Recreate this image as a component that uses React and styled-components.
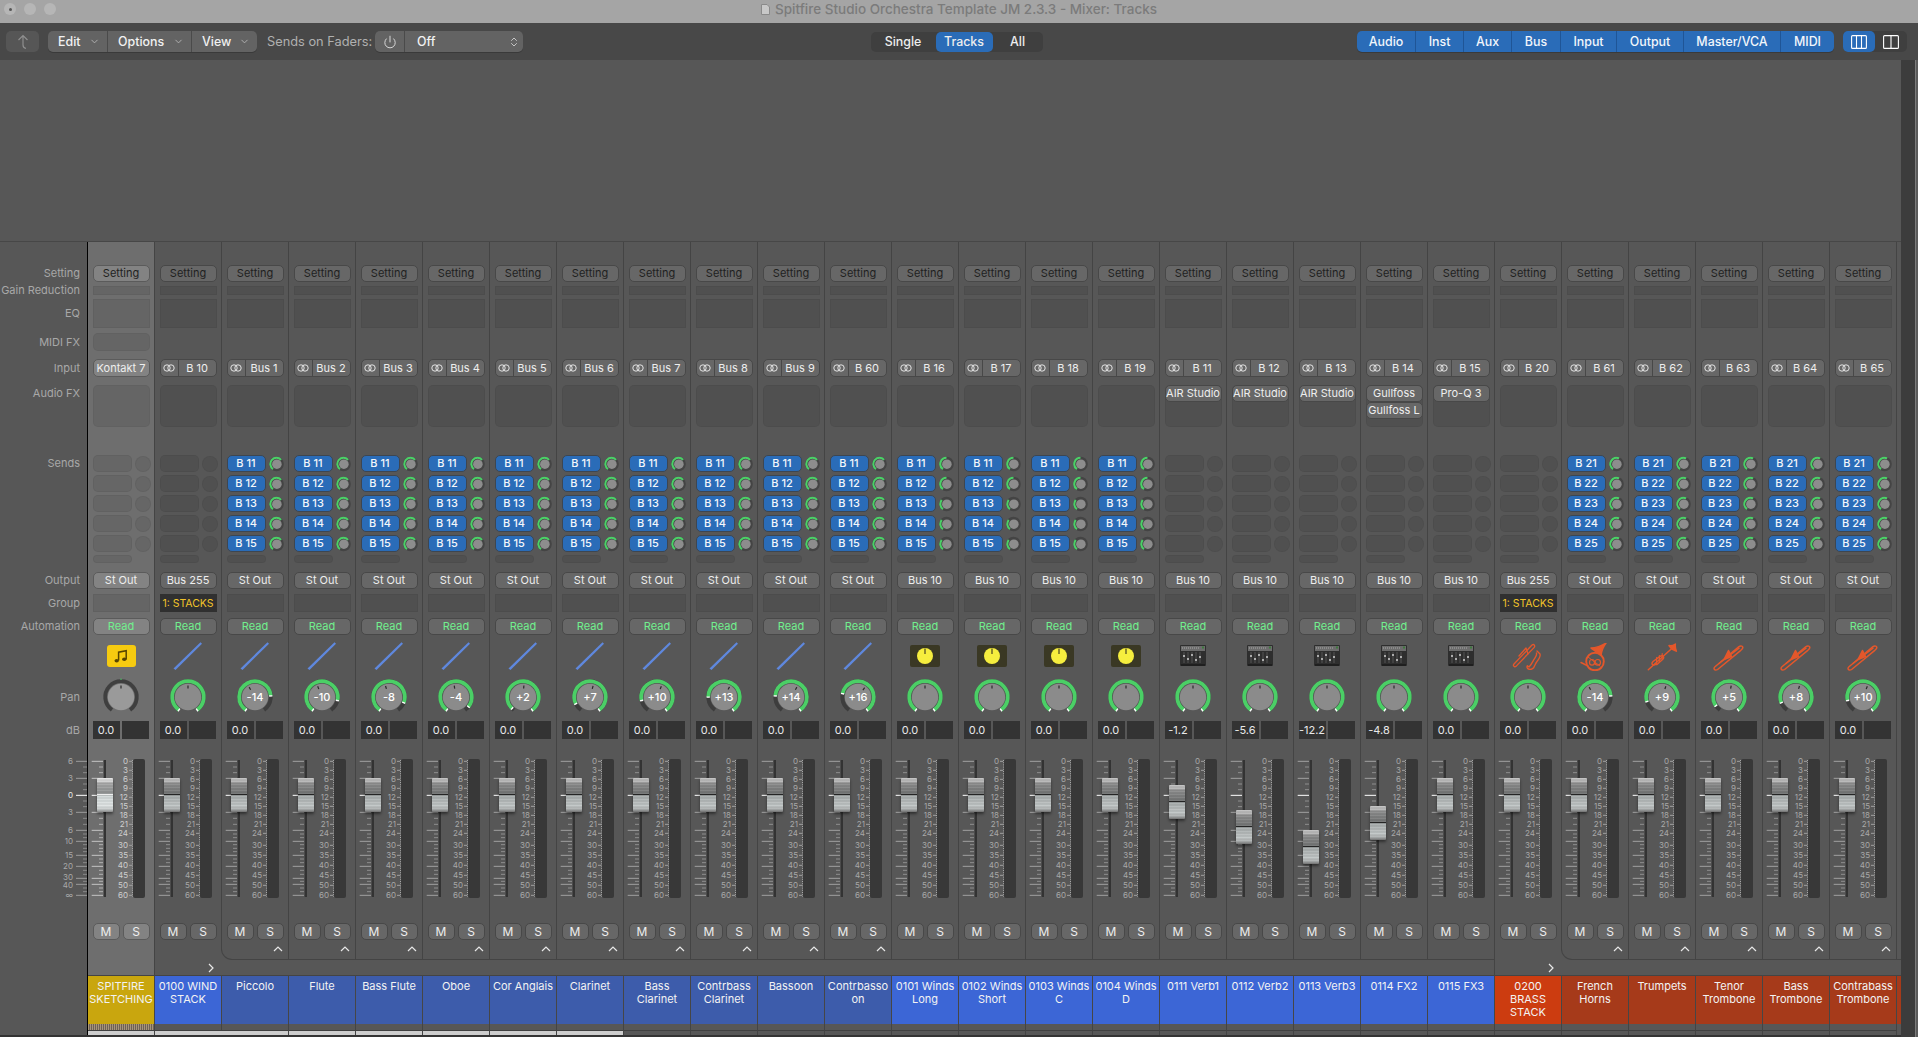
import React from 'react';
import styled, { createGlobalStyle } from 'styled-components';
import { ChevronDown, ChevronsUpDown, Power } from 'lucide-react';

const Global = createGlobalStyle`
  html, body { margin: 0; padding: 0; background: #575757; }
  body { font-family: Inter, "Liberation Sans", sans-serif; font-size: 11px; color: #eee; -webkit-font-smoothing: antialiased; }
  * { box-sizing: border-box; }
`;

const Page = styled.div`
  width: 1918px; height: 1037px; overflow: hidden; display: flex; flex-direction: column; background: #575757;
`;
const TitleBar = styled.div`
  height: 23px; flex: none; background: #a5a5a5; display: grid; grid-template-columns: 1fr auto 1fr; align-items: center; padding: 0 4px 5px;
`;
const Traffic = styled.div` display: flex; gap: 8px; `;
const Light = styled.span`
  width: 12px; height: 12px; border-radius: 50%; background: #b6b6b6; display: flex; align-items: center; justify-content: center;
  &::after { content: ''; width: 3px; height: 3px; border-radius: 50%; background: ${p => p.$dot ? '#555' : 'transparent'}; }
`;
const TitleText = styled.div`
  display: flex; align-items: center; gap: 5px; font-size: 13.5px; font-weight: 500; color: #7b7b7b; white-space: nowrap;
`;
const Toolbar = styled.div`
  height: 37px; flex: none; background: #484848; display: grid; grid-template-columns: 1fr auto 1fr; align-items: center; padding: 0 11px 0 6px; margin-top: 0;
`;
const ToolLeft = styled.div` display: flex; align-items: center; `;
const ToolRight = styled.div` display: flex; align-items: center; justify-content: flex-end; gap: 9px; `;
const ArrowButton = styled.div`
  width: 33px; height: 21px; border-radius: 5px; background: #565656; margin-right: 9px; display: flex; align-items: center; justify-content: center;
`;
const MenuGroup = styled.div`
  display: flex; height: 21px; border-radius: 5px; background: #636363; overflow: hidden; box-shadow: 0 1px 0 #3a3a3a;
  margin-right: ${p => p.$mr || 0}px;
`;
const MenuItem = styled.div`
  width: ${p => p.$w}px; display: flex; align-items: center; justify-content: space-between; padding: 0 7px 0 10px; font-size: 12.4px; font-weight: 500; color: #f1f1f1;
  border-right: 1px solid #4a4a4a; &:last-child { border-right: 0; }
`;
const ToolLabel = styled.div` font-size: 12.8px; color: #b0b0b0; width: 108px; white-space: nowrap; `;
const PowerCell = styled.div` width: 30px; display: flex; align-items: center; justify-content: center; border-right: 1px solid #4a4a4a; `;
const SelectCell = styled.div` width: 118px; display: flex; align-items: center; justify-content: space-between; padding: 0 3px 0 12px; font-size: 12.4px; font-weight: 500; color: #f1f1f1; `;
const ModeGroup = styled.div` display: flex; height: 20px; border-radius: 5px; background: #3f3f3f; `;
const ModeItem = styled.div`
  width: ${p => p.$w}px; border-radius: 5px; display: flex; align-items: center; justify-content: center; font-size: 12.4px; font-weight: 500; color: #eee;
  background: ${p => p.$on ? '#2a6cb8' : 'transparent'};
`;
const FilterGroup = styled.div` display: flex; height: 21px; border-radius: 5px; background: #2a6cb8; overflow: hidden; box-shadow: 0 1px 0 #3a3a3a; `;
const FilterItem = styled.div`
  width: ${p => p.$w}px; display: flex; align-items: center; justify-content: center; font-size: 12.4px; font-weight: 500; color: #f2f6fb;
  border-right: 1px solid #1f5596; &:last-child { border-right: 0; }
`;
const ViewToggle = styled.div` display: flex; height: 21px; border-radius: 5px; background: #3f3f3f; `;
const ViewCell = styled.div`
  width: 32px; border-radius: 5px; display: flex; align-items: center; justify-content: center; background: ${p => p.$on ? '#2a6cb8' : 'transparent'};
`;

const Main = styled.div` flex: 1; display: flex; min-height: 0; `;
const Workspace = styled.div` width: 1901px; flex: none; display: flex; flex-direction: column; `;
const EmptyArea = styled.div` height: 181px; flex: none; background: #575757; `;
const Mixer = styled.div` flex: 1; display: flex; border-top: 1px solid #474747; overflow: hidden; `;
const BottomEdge = styled.div` height: 2px; flex: none; background: #333; `;
const ScrollTrack = styled.div` width: 14px; flex: none; background: #3c3c3c; `;
const WindowEdge = styled.div` width: 3px; flex: none; background: #5a5a5a; border-left: 1px solid #7c7c7c; `;

const ROWS = `[setting-start] 17px [setting-end] 4px [gain-start] 9px [gain-end] 4px [eq-start] 29px [eq-end] 5px [midi-start] 18px [midi-end] 8px [input-start] 18px [input-end] 8px [fx-start] 42px [fx-end] 28px [sends-start] 108px [sends-end] 9px [output-start] 17px [output-end] 5px [group-start] 18px [group-end] 6px [automation-start] 17px [automation-end] 7px [icon-start] 28px [icon-end] 7px [pan-start] 40px [pan-end] 4px [db-start] 18px [db-end] 16px [fader-start] 150px [fader-end] 18px [ms-start] 16px [ms-end foot-start] 20px [foot-end]`;

const LabelColumn = styled.div`
  width: 88px; flex: none; height: 793px; border-right: 1px solid #000; padding-top: 23px;
  display: grid; grid-template-rows: ${ROWS}; grid-template-columns: 87px; align-content: start;
`;
const RowLabel = styled.div`
  grid-row: ${p => p.$row}; grid-column: 1; font-size: 11px; color: #a8a8a8; padding: 0 7px 1px 0; text-align: right; white-space: nowrap;
  display: flex; justify-content: flex-end; align-items: ${p => p.$top ? 'flex-start' : 'center'}; line-height: ${p => p.$top ? '17px' : 'normal'};
`;
const LabelScale = styled.svg` grid-row: fader; grid-column: 1; display: block; overflow: visible; `;

const StripColumn = styled.div`
  width: ${p => p.$wide ? 68 : 67}px; margin-left: ${p => p.$wide ? -1 : 0}px; flex: none; height: 793px; display: flex; flex-direction: column;
  background: ${p => p.$selected ? '#6e6e6e' : 'transparent'};
`;
const StripBody = styled.div`
  height: 718px; flex: none; padding: 23px 4.5px 0 4.5px;
  border-right: ${p => p.$noRight ? '1px solid transparent' : '1px solid #444'};
  border-left: ${p => p.$leftRule ? '1px solid #444' : '0'};
  border-bottom: ${p => p.$folded ? '1px solid #444' : '0'};
  border-bottom-left-radius: ${p => p.$leftRule ? '11px' : '0'};
  display: grid; grid-template-rows: ${ROWS}; grid-template-columns: 57px; align-content: start;
`;
const Tail = styled.div`
  height: 15px; flex: none; display: flex; align-items: center; justify-content: flex-end; padding-right: 7px;
  border-right: ${p => p.$rule ? '1px solid #444' : '1px solid transparent'};
`;
const Tile = styled.div`
  height: 49px; flex: none; border-top: 1px solid #444; border-right: 1px solid #464646; background: ${p => p.$c};
  margin-left: ${p => p.$inset ? 1 : 0}px;
  text-align: center; font-size: 11px; line-height: 13px; color: #f3f3f3; padding-top: 4px; overflow: hidden; overflow-wrap: anywhere;
`;
const TickRow = styled.div`
  height: 6px; flex: none; border-right: 1px solid #444;
  background: ${p => p.$ticks ? 'repeating-linear-gradient(90deg,#a8957a 0 1px,#6d6156 1px 2px)' : 'transparent'};
`;
const ProgressRow = styled.div`
  height: 6px; flex: none; border-top: 1px solid #404040; border-right: 1px solid #444; background: ${p => p.$on ? '#cdcdcd' : 'transparent'};
`;

const PushButton = styled.div`
  grid-row: ${p => p.$row}; grid-column: 1; border-radius: 5px; display: flex; align-items: center; justify-content: center; white-space: nowrap;
  font-size: 11px; padding-bottom: 1px; border: 1px solid ${p => p.$sel ? '#5b5b5b' : '#484848'};
  background: ${p => p.$sel ? '#838383' : '#676767'}; color: ${p => p.$c || '#eeeeee'};
`;
const Well = styled.div`
  grid-row: ${p => p.$row}; grid-column: 1; background: rgba(0,0,0,.08); border: 1px solid rgba(0,0,0,.045);
  border-radius: ${p => p.$r || 0}px;
`;
const InputButton = styled.div`
  grid-row: input; grid-column: 1; display: flex; border-radius: 5px; border: 1px solid #484848; background: #676767; overflow: hidden; font-size: 11px;
`;
const LinkCell = styled.div` width: 18px; flex: none; display: flex; align-items: center; justify-content: center; border-right: 1px solid #484848; `;
const InputName = styled.div` flex: 1; display: flex; align-items: center; justify-content: center; white-space: nowrap; padding-bottom: 1px; `;
const FxStack = styled.div`
  grid-row: fx; grid-column: 1; display: flex; flex-direction: column; gap: 0; border-radius: 5px; background: rgba(0,0,0,.08); border: 1px solid rgba(0,0,0,.045);
`;
const FxSlot = styled.div`
  height: 17px; flex: none; border-radius: 5px; border: 1px solid #484848; background: #676767; margin: -1px -1px 1px; font-size: 11px; padding-bottom: 1px;
  display: flex; align-items: center; justify-content: center; white-space: nowrap; overflow: hidden;
`;
const SendsBlock = styled.div` grid-row: sends; grid-column: 1; display: flex; flex-direction: column; gap: 3px; `;
const SendRow = styled.div` height: 17px; flex: none; display: flex; align-items: center; gap: 3px; `;
const SendButton = styled.div`
  width: 39px; height: 17px; flex: none; border-radius: 5px; font-size: 11px; font-weight: 500; padding-bottom: 1px; display: flex; align-items: center; justify-content: center;
  background: ${p => p.$on ? '#2a6cb8' : 'rgba(0,0,0,.07)'}; border: 1px solid ${p => p.$on ? '#3e4650' : 'rgba(0,0,0,.05)'}; color: #f4f7fb;
`;
const SendStub = styled.div` width: 39px; height: 8px; flex: none; border-radius: 4px; background: rgba(0,0,0,.07); border: 1px solid rgba(0,0,0,.05); `;
const GroupBox = styled.div`
  grid-row: group; grid-column: 1; background: #303030; color: #f2c42a; font-size: 10.5px; display: flex; align-items: center; justify-content: center; white-space: nowrap; overflow: hidden;
`;
const IconCell = styled.div` grid-row: icon; grid-column: 1; margin: 0 -5px; display: flex; justify-content: center; align-items: flex-start; `;
const NoteTile = styled.div`
  width: 29px; height: 22px; margin-top: 3px; border-radius: 3px; background: #f6cb10; display: flex; align-items: center; justify-content: center;
`;
const KnobTile = styled.div`
  width: 30px; height: 22px; margin-top: 3px; border-radius: 2px; background: #3a3824; display: flex; align-items: center; justify-content: center;
`;
const PanCell = styled.div` grid-row: pan; grid-column: 1; display: flex; justify-content: center; `;
const DbRow = styled.div` grid-row: db; grid-column: 1; display: flex; gap: 2px; `;
const DbBox = styled.div` width: 27px; flex: none; background: #333; text-align: center; font-size: 11px; line-height: 18px; color: #e9e9e9; white-space: nowrap; `;
const FaderArea = styled.div` grid-row: fader; grid-column: 1; margin-left: -5px; width: 62px; position: relative; display: flex; align-items: flex-start; `;
const ScaleSvg = styled.svg` width: 45px; height: 150px; flex: none; display: block; overflow: visible; `;
const Meter = styled.div` width: 12px; height: 139px; margin-top: 4px; flex: none; background: #383838; border-radius: 2px; `;
const Cap = styled.div`
  position: absolute; left: 9px; top: ${p => p.$top}px; width: 16.5px; height: 34px; border-radius: 1px; box-shadow: 0 2px 3px rgba(0,0,0,.45);
  background:
    linear-gradient(180deg, transparent 0 16px, ${p => p.$sel ? '#eee' : '#242424'} 16px 17px, transparent 17px),
    repeating-linear-gradient(180deg, rgba(255,255,255,.05) 0 1px, rgba(0,0,0,.05) 1px 3px),
    ${p => p.$sel
      ? 'linear-gradient(180deg,#e6e6e6 0,#cfcfcf 4px,#a8a8a8 5px,#8f9292 16px,#d2d8d8 18px,#dfe4e4 28px,#bfc3c3 32px,#7b7b7b 34px)'
      : 'linear-gradient(180deg,#c2c2c2 0,#b4b4b4 4px,#8f8f8f 5px,#727474 16px,#a8adad 18px,#c2c7c7 28px,#a5a8a8 32px,#626262 34px)'};
`;
const MsRow = styled.div` grid-row: ms; grid-column: 1; display: flex; gap: 3px; `;
const MsButton = styled.div`
  width: 27px; height: 17px; flex: none; border-radius: 5px; font-size: 12px; padding-bottom: 1px; display: flex; align-items: center; justify-content: center; color: #eee;
  background: ${p => p.$sel ? '#838383' : '#676767'}; border: 1px solid ${p => p.$sel ? '#5b5b5b' : '#484848'};
`;
const FootCell = styled.div` grid-row: foot; grid-column: 1; display: flex; justify-content: flex-end; align-items: flex-start; padding: 7px 0 0 0; margin-right: 1px; `;

const polar = (c, r, deg) => {
  const a = (deg - 90) * Math.PI / 180;
  return [c + r * Math.cos(a), c + r * Math.sin(a)];
};
const arc = (c, r, s, e) => {
  const [x1, y1] = polar(c, r, s);
  const [x2, y2] = polar(c, r, e);
  return `M${x1.toFixed(2)} ${y1.toFixed(2)}A${r} ${r} 0 ${e - s > 180 ? 1 : 0} 1 ${x2.toFixed(2)} ${y2.toFixed(2)}`;
};

const PanKnob = ({ value, selected }) => {
  const c = 20, R = 15.8;
  const start = value > 0 ? -145 + value * 4.2 : -145;
  const end = value < 0 ? 145 + value * 4.2 : 145;
  const [t1x, t1y] = polar(c, R - 1.6, start), [t1X, t1Y] = polar(c, R + 1.6, start);
  const [t2x, t2y] = polar(c, R - 1.6, end), [t2X, t2Y] = polar(c, R + 1.6, end);
  const pa = (value || 0) * 2.2;
  const [px, py] = polar(c, 8.5, pa), [pX, pY] = polar(c, 11.5, pa);
  return (
    <svg width="40" height="40" viewBox="0 0 40 40">
      <path d={arc(c, R, -145, 145)} fill="none" stroke={selected ? '#3f3f3f' : '#3d3d3d'} strokeWidth="3.8" />
      {!selected && <path d={arc(c, R, start, end)} fill="none" stroke="#4bcf66" strokeWidth="3.8" />}
      {!selected && <path d={`M${t1x} ${t1y}L${t1X} ${t1Y}M${t2x} ${t2y}L${t2X} ${t2Y}`} stroke="#fff" strokeWidth="1.4" />}
      {selected && <path d="M20 1.5V3" stroke="#4bcf66" strokeWidth="1" />}
      <circle cx={c} cy={c} r="13.2" fill={selected ? '#9a9a9a' : '#8b8b8b'} />
      <path d={`M${px} ${py}L${pX} ${pY}`} stroke="#2a2a2a" strokeWidth="1.2" />
      {value ? <text x={c} y={c + 4} textAnchor="middle" fontSize="11" fontWeight="500" fill="#fff" fontFamily="Inter, sans-serif">{value > 0 ? `+${value}` : `-${-value}`}</text> : null}
    </svg>
  );
};

const SendKnob = ({ end }) => (
  <svg width="16" height="16" viewBox="0 0 16 16">
    <circle cx="8" cy="8" r="7.8" fill="#444" />
    <path d={arc(8, 6.6, -145, end)} fill="none" stroke="#4bd067" strokeWidth="2.2" />
    <circle cx="8.4" cy="8.2" r="5.1" fill="#8d8d8d" />
  </svg>
);
const EmptySendKnob = styled.div` width: 16px; height: 16px; flex: none; border-radius: 50%; background: rgba(0,0,0,.07); border: 1px solid rgba(0,0,0,.05); `;

const LinkIcon = () => (
  <svg width="12" height="8" viewBox="0 0 12 8" fill="none" stroke="#e4e4e4" strokeWidth="1">
    <circle cx="4" cy="4" r="3.2" /><circle cx="8" cy="4" r="3.2" />
  </svg>
);

const NoteIcon = () => (
  <svg width="16" height="16" viewBox="0 0 16 16">
    <path d="M5.6 12.6V4.2L13.2 2.7V11.2" fill="none" stroke="#574500" strokeWidth="1.5" />
    <ellipse cx="3.7" cy="12.7" rx="2.2" ry="1.7" fill="#574500" />
    <ellipse cx="11.3" cy="11.3" rx="2.2" ry="1.7" fill="#574500" />
  </svg>
);
const BlueLine = () => (
  <svg width="30" height="28" viewBox="0 0 30 28"><path d="M0.5 26.5L27.5 0.2L29 1.7L2.5 28Z" fill="#5f88de" /></svg>
);
const YellowKnob = () => (
  <svg width="18" height="18" viewBox="0 0 18 18">
    <circle cx="9" cy="9" r="8" fill="#f6ee3e" />
    <path d="M9 1.5V7" stroke="#4a4620" strokeWidth="1.2" />
  </svg>
);
const ThumbBox = styled.div` margin-top: 3px; `;
const MixerThumb = () => (
  <ThumbBox>
    <svg width="26" height="22" viewBox="0 0 26 22" display="block">
      <rect x="0" y="0" width="26" height="21" rx="1" fill="#2e2e2e" />
      <rect x="1" y="1" width="24" height="5" fill="#6c6c6c" />
      <path d="M2 3H20" stroke="#a8a8a8" strokeWidth="1.2" strokeDasharray="1 1" />
      <rect x="22" y="1.5" width="2" height="2" fill="#3d7a3d" />
      <path d="M4 7V18M8 7V18M12 7V18M16 7V18M20 7V18" stroke="#5f5f5f" strokeWidth=".8" />
      <path d="M3 11H5M7 14H9M11 10H13M15 15H17M19 12H21" stroke="#cfcfcf" strokeWidth="1.3" />
      <rect x="1" y="19" width="24" height="2" fill="#1f1f1f" />
    </svg>
  </ThumbBox>
);
const BrassSvg = styled.svg` display: block; margin-top: ${p => p.$mt || 2}px; fill: none; stroke: #e4572b; stroke-width: 1.5; stroke-linejoin: round; stroke-linecap: round; `;
const Trombone = () => (
  <BrassSvg width="32" height="26" viewBox="0 0 32 26" $mt={3}>
    <path d="M2.5 25C.8 25 .6 23 2 21.8L26 1.6C27.8.3 30.4 1.2 29.6 3.2C29.4 3.9 28.6 4.6 27.8 5.3L4.6 24.5C3.9 25 3.3 25 2.5 25Z" />
    <path d="M6 18.5L26 3.2" />
    <path d="M11 14.5L15.5 5.5L18.5 11.5Z" fill="#e4572b" />
  </BrassSvg>
);
const Horn = () => (
  <BrassSvg width="32" height="28" viewBox="0 0 32 28" $mt={1}>
    <circle cx="16" cy="18.5" r="8.8" strokeWidth="1.9" />
    <path d="M10.5 19.5C10.5 15.5 15.5 15.5 15.5 19.5C15.5 23 10.5 23 10.5 19.5ZM16 19.5C16 15.5 21.5 15.5 21.5 19.5C21.5 23 16 23 16 19.5Z" strokeWidth="1.2" />
    <path d="M9 14L21 23" strokeWidth="1" />
    <path d="M12 5C16 5 23 3 27 0C24 4 22.5 7 22 12.5L17.5 9C15 7 13 6 12 5Z" fill="#e4572b" />
    <path d="M2 19.5L9 23" />
  </BrassSvg>
);
const Trumpet = () => (
  <BrassSvg width="32" height="28" viewBox="0 0 32 28" $mt={1}>
    <path d="M2.3 26.7L25.5 5.7" />
    <path d="M23 2.6C25 3 27 2.6 29.4 1C29 3.4 29.4 6 30.4 8.2C28.4 7.2 27 7 26 6C25 5 23.8 4 23 2.6Z" fill="#e4572b" />
    <path d="M9 21.5C6.5 23 4.8 20.5 7 18.5L14 13.3C16.5 11.7 19 14.3 16.8 16.3L11 21.5Z" />
    <path d="M10.6 14.5V20.5M13.4 12.5V18.5M16.2 10.7V16.3" strokeWidth="1.2" />
  </BrassSvg>
);
const SaxTrombone = () => (
  <BrassSvg width="32" height="28" viewBox="0 0 32 28" $mt={1}>
    <path d="M2 21C.6 22.5 2.2 24.5 4 23.4L22 4.6C23.6 3 22 .6 20 2Z" strokeWidth="1.3" />
    <path d="M7 13L14 5L16 11" strokeWidth="1.3" />
    <path d="M25 8L28 11C29 14 26 17 24 20L22.5 23C21.8 25.5 18.8 27 16.5 26C15 25.4 14.6 23.6 15.4 22.8L17 24C19 22 20 20 21.6 17C23 14.6 25.5 12 24.4 10" strokeWidth="1.4" />
  </BrassSvg>
);

const MAJ = [64, 115, 166, 217, 271, 304, 346, 379, 415, 433, 466].map(z => z / 3 - 15);
const MIN = [81, 98, 132, 149, 183, 200, 235, 253, 282, 293, 314, 325, 335, 357, 368, 391, 403, 424, 444, 455].map(z => z / 3 - 15);
const LEFT_LABELS = ['6', '3', '0', '3', '6', '10', '15', '20', '30', '40', '∞'];
const METER = [['0', 64], ['3', 91], ['6', 118], ['9', 145], ['12', 172], ['15', 199], ['18', 226], ['21', 253], ['24', 280], ['30', 316], ['35', 346], ['40', 376], ['45', 406], ['50', 436], ['60', 466]];

const StripScale = ({ selected }) => (
  <ScaleSvg viewBox="0 0 45 150">
    {MAJ.map((y, i) => <path key={i} d={`M3.7 ${y}H15`} stroke={i === 2 ? '#fff' : (selected ? '#c4c4c4' : '#a0a0a0')} strokeWidth="1" />)}
    {MIN.map((y, i) => <path key={i} d={`M11 ${y}H15`} stroke={selected ? '#b0b0b0' : '#8f8f8f'} strokeWidth="1" />)}
    <rect x="15.7" y="5" width="2.3" height="137" fill="#333" />
    {METER.map(([t, z]) => (
      <g key={t}>
        <text x="40" y={z / 3 - 15 + 3} textAnchor="end" fontSize="8" fill={selected ? '#cfcfcf' : '#a8a8a8'} fontFamily="Inter, sans-serif">{t}</text>
        <path d={`M41 ${z / 3 - 15}H44`} stroke="#a0a0a0" strokeWidth="1" />
      </g>
    ))}
    <path d="M44.5 5V142" stroke="#a8a8a8" strokeWidth="1" strokeDasharray="1 1.2" />
  </ScaleSvg>
);
const FaderLabels = () => (
  <LabelScale width="87" height="150" viewBox="0 0 87 150">
    {MAJ.map((y, i) => (
      <g key={i}>
        <text x="73" y={y + 3 + (i === 8 ? -1 : i === 9 ? 1 : 0)} textAnchor="end" fontSize="8" fill={i === 2 ? '#e6e6e6' : '#a8a8a8'} fontFamily="Inter, sans-serif">{LEFT_LABELS[i]}</text>
        <path d={`M76 ${y}H87`} stroke={i === 2 ? '#fff' : '#9c9c9c'} strokeWidth="1" />
      </g>
    ))}
    {MIN.map((y, i) => <path key={i} d={`M83 ${y}H87`} stroke="#8a8a8a" strokeWidth="1" />)}
  </LabelScale>
);

const S = (a, b, c, d, e) => [a, b, c, d, e];
const B1 = ['B 11', 'B 12', 'B 13', 'B 14', 'B 15'];
const B2 = ['B 21', 'B 22', 'B 23', 'B 24', 'B 25'];
const GOLD = '#c9a60e', BRIGHT = '#3c66d6', DEEP = '#3d5cab', ORANGE = '#cc3c10', RUST = '#a63a1a';

const strips = [
  { name: 'SPITFIRE SKETCHING', c: GOLD, input: 'Kontakt 7', plain: true, out: 'St Out', pan: 0, icon: 'note', selected: true, kind: 'plain' },
  { name: '0100 WIND STACK', c: BRIGHT, input: 'B 10', out: 'Bus 255', pan: 0, icon: 'line', group: true, kind: 'stack' },
  ...[
    ['Piccolo', 'Bus 1', -14], ['Flute', 'Bus 2', -10], ['Bass Flute', 'Bus 3', -8], ['Oboe', 'Bus 4', -4], ['Cor Anglais', 'Bus 5', 2],
    ['Clarinet', 'Bus 6', 7], ['Bass Clarinet', 'Bus 7', 10], ['Contrbass Clarinet', 'Bus 8', 13], ['Bassoon', 'Bus 9', 14], ['Contrbasso on', 'B 60', 16],
  ].map(([name, input, pan], i) => ({ name, c: DEEP, input, out: 'St Out', pan, icon: 'line', sends: B1, arcs: S(48, 48, 48, 48, 48), kind: i === 0 ? 'first' : 'child', up: true })),
  ...[
    ['0101 Winds Long', 'B 16'], ['0102 Winds Short', 'B 17'], ['0103 Winds C', 'B 18'], ['0104 Winds D', 'B 19'],
  ].map(([name, input], i) => ({ name, c: BRIGHT, input, out: 'Bus 10', pan: 0, icon: 'knob', sends: B1, arcs: S(0, 0, -50, -50, -50), kind: 'child' })),
  { name: '0111 Verb1', c: BRIGHT, input: 'B 11', out: 'Bus 10', pan: 0, icon: 'thumb', fx: ['AIR Studio'], db: '-1.2', y: 802, kind: 'child' },
  { name: '0112 Verb2', c: BRIGHT, input: 'B 12', out: 'Bus 10', pan: 0, icon: 'thumb', fx: ['AIR Studio'], db: '-5.6', y: 827, kind: 'child' },
  { name: '0113 Verb3', c: BRIGHT, input: 'B 13', out: 'Bus 10', pan: 0, icon: 'thumb', fx: ['AIR Studio'], db: '-12.2', y: 847, kind: 'child' },
  { name: '0114 FX2', c: BRIGHT, input: 'B 14', out: 'Bus 10', pan: 0, icon: 'thumb', fx: ['Gullfoss', 'Gullfoss L'], db: '-4.8', y: 823, kind: 'child' },
  { name: '0115 FX3', c: BRIGHT, input: 'B 15', out: 'Bus 10', pan: 0, icon: 'thumb', fx: ['Pro-Q 3'], kind: 'child', rule: true },
  { name: '0200 BRASS STACK', c: ORANGE, input: 'B 20', out: 'Bus 255', pan: 0, icon: 'sax', group: true, kind: 'stack' },
  { name: 'French Horns', c: RUST, input: 'B 61', out: 'St Out', pan: -14, icon: 'horn', sends: B2, arcs: S(25, 25, 25, 25, 25), kind: 'first', up: true },
  { name: 'Trumpets', c: RUST, input: 'B 62', out: 'St Out', pan: 9, icon: 'trumpet', sends: B2, arcs: S(25, 25, 25, 25, 25), kind: 'child', up: true },
  { name: 'Tenor Trombone', c: RUST, input: 'B 63', out: 'St Out', pan: 5, icon: 'trombone', sends: B2, arcs: S(25, 25, 25, 25, 25), kind: 'child', up: true },
  { name: 'Bass Trombone', c: RUST, input: 'B 64', out: 'St Out', pan: 8, icon: 'trombone', sends: B2, arcs: S(25, 25, 25, 25, 25), kind: 'child', up: true },
  { name: 'Contrabass Trombone', c: RUST, input: 'B 65', out: 'St Out', pan: 10, icon: 'trombone', sends: B2, arcs: S(25, 25, 25, 25, 25), kind: 'child', up: true },
];

const UpChevron = () => <svg width="10" height="6" viewBox="0 0 10 6" fill="none" stroke="#e8e8e8" strokeWidth="1.2"><path d="M1 5L5 1L9 5" /></svg>;
const RightChevron = () => <svg width="6" height="10" viewBox="0 0 6 10" fill="none" stroke="#e8e8e8" strokeWidth="1.2"><path d="M1 1L5 5L1 9" /></svg>;

const STRIP_ICON = {
  note: <NoteTile><NoteIcon /></NoteTile>,
  line: <BlueLine />,
  knob: <KnobTile><YellowKnob /></KnobTile>,
  thumb: <MixerThumb />,
  sax: <SaxTrombone />,
  horn: <Horn />,
  trumpet: <Trumpet />,
  trombone: <Trombone />,
};

const Strip = ({ s, index }) => {
  const sel = !!s.selected;
  const folded = s.kind === 'first' || s.kind === 'child';
  const capTop = (s.y || 795) - 17 - 755;
  return (
    <StripColumn $selected={sel} $wide={s.kind === 'first'}>
      <StripBody $noRight={s.kind === 'stack'} $leftRule={s.kind === 'first'} $folded={folded}>
        <PushButton $row="setting" $sel={sel} $c="#1f1f1f">Setting</PushButton>
        <Well $row="gain" />
        <Well $row="eq" />
        {sel && <Well $row="midi" $r={5} />}
        {s.plain
          ? <PushButton $row="input" $sel>{s.input}</PushButton>
          : <InputButton><LinkCell><LinkIcon /></LinkCell><InputName>{s.input}</InputName></InputButton>}
        <FxStack>{(s.fx || []).map(f => <FxSlot key={f}>{f}</FxSlot>)}</FxStack>
        <SendsBlock>
          {[0, 1, 2, 3, 4].map(i => (
            <SendRow key={i}>
              {s.sends
                ? <><SendButton $on>{s.sends[i]}</SendButton><SendKnob end={s.arcs[i]} /></>
                : <><SendButton /><EmptySendKnob /></>}
            </SendRow>
          ))}
          <SendStub />
        </SendsBlock>
        <PushButton $row="output" $sel={sel}>{s.out}</PushButton>
        {s.group ? <GroupBox>1: STACKS</GroupBox> : <Well $row="group" />}
        <PushButton $row="automation" $sel={sel} $c="#71f08e">Read</PushButton>
        <IconCell>{STRIP_ICON[s.icon]}</IconCell>
        <PanCell><PanKnob value={s.pan} selected={sel} /></PanCell>
        <DbRow><DbBox>{s.db || '0.0'}</DbBox><DbBox /></DbRow>
        <FaderArea>
          <StripScale selected={sel} />
          <Meter />
          <Cap $top={capTop} $sel={sel} />
        </FaderArea>
        <MsRow><MsButton $sel={sel}>M</MsButton><MsButton $sel={sel}>S</MsButton></MsRow>
        {s.up && <FootCell><UpChevron /></FootCell>}
      </StripBody>
      <Tail $rule={s.kind === 'plain' || s.rule}>{s.kind === 'stack' && <RightChevron />}</Tail>
      <Tile $c={s.c} $inset={s.kind === 'first'}>{s.name}</Tile>
      <TickRow $ticks={sel} />
      <ProgressRow $on={index < 8} />
    </StripColumn>
  );
};

const StubColumn = styled.div` width: 4px; flex: none; display: flex; flex-direction: column; `;
const StubBody = styled.div` height: 718px; flex: none; border-bottom: 1px solid #444; `;
const StubTail = styled.div` height: 15px; flex: none; `;
const StubTile = styled.div` height: 49px; flex: none; border-top: 1px solid #444; background: ${RUST}; `;

export default function App() {
  return (
    <Page>
      <Global />
      <TitleBar>
        <Traffic><Light $dot /><Light /><Light /></Traffic>
        <TitleText>
          <svg width="9" height="11" viewBox="0 0 9 11"><path d="M.5.5H6L8.5 3V10.5H.5Z" fill="#c8c8c8" stroke="#8a8a8a" /></svg>
          Spitfire Studio Orchestra Template JM 2.3.3 - Mixer: Tracks
        </TitleText>
        <span />
      </TitleBar>
      <Toolbar>
        <ToolLeft>
          <ArrowButton>
            <svg width="12" height="16" viewBox="0 0 12 16" fill="none" stroke="#8e8e8e" strokeWidth="1.2"><path d="M1.5 6L6 1.5L10.5 6M6 2V11C6 13 7 14 9 14.5" /></svg>
          </ArrowButton>
          <MenuGroup $mr={10}>
            <MenuItem $w={60}>Edit<ChevronDown size={11} color="#b4b4b4" /></MenuItem>
            <MenuItem $w={84}>Options<ChevronDown size={11} color="#b4b4b4" /></MenuItem>
            <MenuItem $w={65}>View<ChevronDown size={11} color="#b4b4b4" /></MenuItem>
          </MenuGroup>
          <ToolLabel>Sends on Faders:</ToolLabel>
          <MenuGroup>
            <PowerCell><Power size={14} color="#e8e8e8" strokeWidth={1.5} /></PowerCell>
            <SelectCell>Off<ChevronsUpDown size={12} color="#c4c4c4" /></SelectCell>
          </MenuGroup>
        </ToolLeft>
        <ModeGroup>
          <ModeItem $w={65}>Single</ModeItem>
          <ModeItem $w={57} $on>Tracks</ModeItem>
          <ModeItem $w={50}>All</ModeItem>
        </ModeGroup>
        <ToolRight>
          <FilterGroup>
            {[['Audio', 59], ['Inst', 48], ['Aux', 48], ['Bus', 49], ['Input', 56], ['Output', 67], ['Master/VCA', 97], ['MIDI', 53]].map(([t, w]) => (
              <FilterItem key={t} $w={w}>{t}</FilterItem>
            ))}
          </FilterGroup>
          <ViewToggle>
            <ViewCell $on>
              <svg width="16" height="14" viewBox="0 0 16 14" fill="none" stroke="#fff" strokeWidth="1.1"><rect x=".6" y=".6" width="14.8" height="12.8" rx="1" /><path d="M5.5 1V13M10.5 1V13" /></svg>
            </ViewCell>
            <ViewCell>
              <svg width="16" height="14" viewBox="0 0 16 14" fill="none" stroke="#fff" strokeWidth="1.1"><rect x=".6" y=".6" width="14.8" height="12.8" rx="1" /><path d="M8 1V13" /></svg>
            </ViewCell>
          </ViewToggle>
        </ToolRight>
      </Toolbar>
      <Main>
        <Workspace>
          <EmptyArea />
          <Mixer>
            <LabelColumn>
              <RowLabel $row="setting">Setting</RowLabel>
              <RowLabel $row="gain">Gain Reduction</RowLabel>
              <RowLabel $row="eq">EQ</RowLabel>
              <RowLabel $row="midi">MIDI FX</RowLabel>
              <RowLabel $row="input">Input</RowLabel>
              <RowLabel $row="fx" $top>Audio FX</RowLabel>
              <RowLabel $row="sends" $top>Sends</RowLabel>
              <RowLabel $row="output">Output</RowLabel>
              <RowLabel $row="group">Group</RowLabel>
              <RowLabel $row="automation">Automation</RowLabel>
              <RowLabel $row="pan">Pan</RowLabel>
              <RowLabel $row="db">dB</RowLabel>
              <FaderLabels />
            </LabelColumn>
            {strips.map((s, i) => <Strip key={s.name} s={s} index={i} />)}
            <StubColumn><StubBody /><StubTail /><StubTile /></StubColumn>
          </Mixer>
          <BottomEdge />
        </Workspace>
        <ScrollTrack />
        <WindowEdge />
      </Main>
    </Page>
  );
}
